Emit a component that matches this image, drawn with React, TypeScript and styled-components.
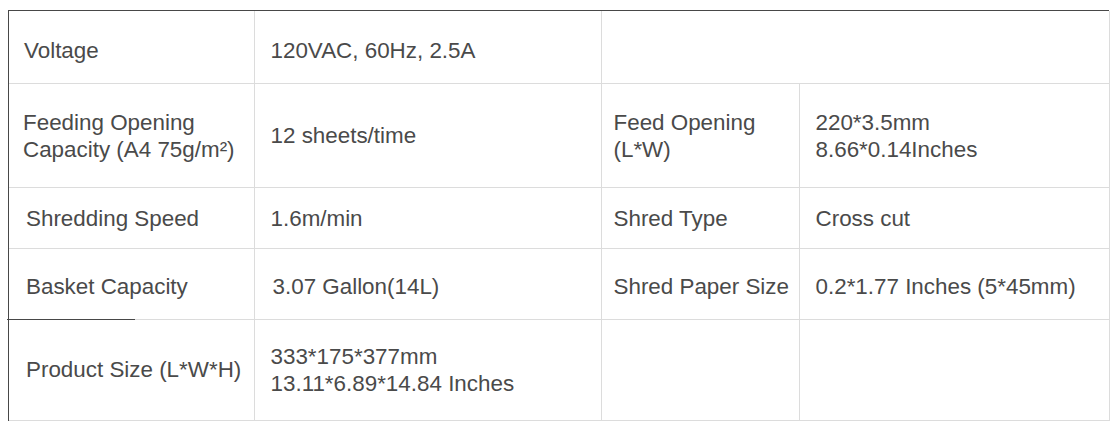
import * as React from "react";
import styled, { createGlobalStyle } from "styled-components";

const GlobalStyle = createGlobalStyle`
  html, body {
    margin: 0;
    padding: 0;
    background: #ffffff;
  }
  body {
    padding: 10px 0 0 8px;
    font-family: "Liberation Sans", Arial, sans-serif;
  }
`;

const Frame = styled.div`
  width: 1100px;
  border-top: 1px solid #484848;
  border-left: 1px solid #484848;
`;

const SpecTable = styled.table`
  border-collapse: collapse;
  table-layout: fixed;
  width: 1100px;
  border-top: hidden;
  border-left: hidden;
  color: #4a4a4a;
  font-size: 22.4px;
  line-height: 27px;
`;

const Col = styled.col<{ $w: number }>`
  width: ${(p) => p.$w}px;
`;

const Row = styled.tr<{ $h: number; $shift: number }>`
  height: ${(p) => p.$h}px;

  & > td {
    padding-top: ${(p) => p.$shift}px;
  }
`;

const Cell = styled.td<{ $pad?: number }>`
  border: 1px solid #dcdcdc;
  padding-left: ${(p) => p.$pad ?? 16}px;
  padding-right: 0;
  padding-bottom: 0;
  vertical-align: middle;
  position: relative;
`;

const DarkEdge = styled.span`
  position: absolute;
  left: -2px;
  top: -1px;
  width: 128px;
  height: 1px;
  background: #484848;
`;

type Spec = { text: string[]; pad?: number; span?: number };

const rows: { h: number; shift: number; cells: Spec[]; mark?: boolean }[] = [
  {
    h: 72,
    shift: 7,
    cells: [
      { text: ["Voltage"], pad: 15 },
      { text: ["120VAC, 60Hz, 2.5A"] },
      { text: [], span: 2 },
    ],
  },
  {
    h: 104,
    shift: 1,
    cells: [
      { text: ["Feeding Opening", "Capacity (A4 75g/m²)"], pad: 14 },
      { text: ["12 sheets/time"] },
      { text: ["Feed Opening", "(L*W)"], pad: 12 },
      { text: ["220*3.5mm", "8.66*0.14Inches"] },
    ],
  },
  {
    h: 61,
    shift: 1,
    cells: [
      { text: ["Shredding Speed"], pad: 17 },
      { text: ["1.6m/min"] },
      { text: ["Shred Type"], pad: 12 },
      { text: ["Cross cut"] },
    ],
  },
  {
    h: 71,
    shift: 6,
    cells: [
      { text: ["Basket Capacity"], pad: 17 },
      { text: ["3.07 Gallon(14L)"], pad: 18 },
      { text: ["Shred Paper Size"], pad: 12 },
      { text: ["0.2*1.77 Inches (5*45mm)"] },
    ],
  },
  {
    h: 101,
    shift: 0,
    mark: true,
    cells: [
      { text: ["Product Size (L*W*H)"], pad: 17 },
      { text: ["333*175*377mm", "13.11*6.89*14.84 Inches"] },
      { text: [] },
      { text: [] },
    ],
  },
];

export default function App() {
  return (
    <>
      <GlobalStyle />
      <Frame>
        <SpecTable>
          <colgroup>
            <Col $w={245} />
            <Col $w={347} />
            <Col $w={198} />
            <Col $w={310} />
          </colgroup>
          <tbody>
            {rows.map((r, i) => (
              <Row key={i} $h={r.h} $shift={r.shift}>
                {r.cells.map((c, j) => (
                  <Cell key={j} $pad={c.pad} colSpan={c.span}>
                    {r.mark && j === 0 && <DarkEdge />}
                    {c.text.map((t, k) => (
                      <React.Fragment key={k}>
                        {k > 0 && <br />}
                        {t}
                      </React.Fragment>
                    ))}
                  </Cell>
                ))}
              </Row>
            ))}
          </tbody>
        </SpecTable>
      </Frame>
    </>
  );
}
